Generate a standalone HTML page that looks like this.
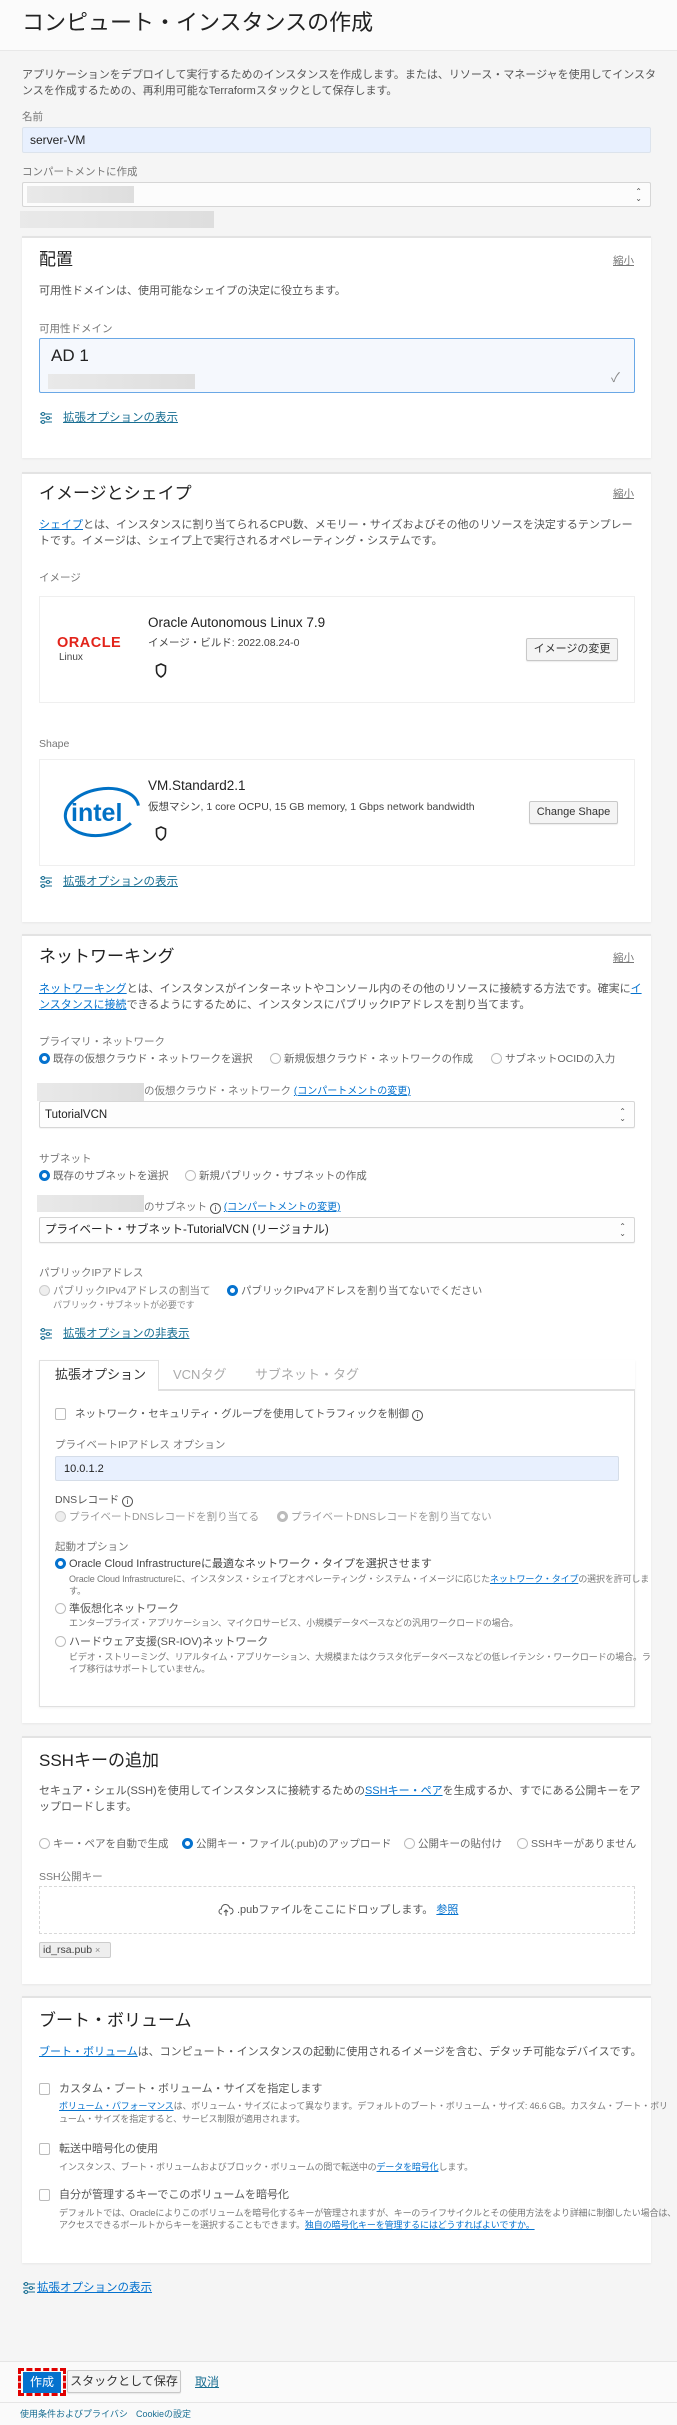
<!DOCTYPE html>
<html><head><meta charset="utf-8">
<style>
*{margin:0;padding:0;box-sizing:border-box}
body{width:677px;height:2425px;position:relative;background:#f5f5f5;font-family:"Liberation Sans","Noto Sans CJK JP",sans-serif;color:#444;overflow:hidden}
.a{position:absolute}
.t{position:absolute;white-space:nowrap;line-height:16px;font-size:11px}
.lb{color:#777;font-size:10.5px}
.h{font-size:17px;line-height:22px;color:#222}
.card{position:absolute;left:22px;width:629px;background:#fff;border-top:2px solid #e3e3e3;box-shadow:0 1px 2px rgba(0,0,0,.06)}
.lk{color:#0572ce;text-decoration:underline}
.tl{color:#1a6f93;text-decoration:underline;font-size:11.5px}
.sm{color:#777;font-size:9px;line-height:12px;letter-spacing:-0.15px}
.blur{position:absolute;background:linear-gradient(90deg,#e9e9e9,#dedede);}
.sel{position:absolute;left:39px;width:596px;background:#fdfdfd;border:1px solid #d6d6d6;border-radius:2px;box-shadow:0 1px 1px rgba(0,0,0,.05)}
.arr{position:absolute;right:8px;top:50%;transform:translateY(-50%);font-size:8px;line-height:7px;color:#555;text-align:center}
.r{position:absolute;width:11px;height:11px;border-radius:50%;border:1px solid #bbb;background:#fff}
.r.on{border:3px solid #0572ce}
.r.dis{background:#eee;border-color:#ccc}
.r.don{border:3px solid #bbb}
.cb{position:absolute;width:11px;height:12px;border:1px solid #bbb;border-radius:2px;background:#fff}
.btn{position:absolute;background:#f4f4f4;border:1px solid #c8c8c8;border-radius:2px;font-size:11px;color:#333;text-align:center;box-shadow:0 1px 1px rgba(0,0,0,.08)}
.shr{font-size:10.5px;color:#777;text-decoration:underline}
</style></head><body>

<div class="a" style="left:0;top:0;width:677px;height:51px;background:#fbfbfb;border-bottom:1px solid #e8e8e8"></div>
<div class="t" style="left:22px;top:9px;font-size:22px;line-height:28px;color:#222">コンピュート・インスタンスの作成</div>

<div class="t" style="left:22px;top:67px;color:#555">アプリケーションをデプロイして実行するためのインスタンスを作成します。または、リソース・マネージャを使用してインスタ</div>
<div class="t" style="left:22px;top:83px;color:#555">ンスを作成するための、再利用可能なTerraformスタックとして保存します。</div>
<div class="t lb" style="left:22px;top:109px">名前</div>
<div class="a" style="left:22px;top:127px;width:629px;height:26px;background:#e8f0fe;border:1px solid #dce3ec;border-radius:2px"></div>
<div class="t" style="left:30px;top:132px;font-size:12px;color:#222">server-VM</div>
<div class="t lb" style="left:22px;top:164px">コンパートメントに作成</div>
<div class="a" style="left:22px;top:182px;width:629px;height:25px;background:#fcfcfc;border:1px solid #d6d6d6;border-radius:2px"><div class="arr">⌃<br>⌄</div></div>
<div class="blur" style="left:27px;top:186px;width:107px;height:17px"></div>
<div class="blur" style="left:20px;top:211px;width:194px;height:17px"></div>

<div class="card" style="top:236px;height:222px"></div>
<div class="t h" style="left:39px;top:249px">配置</div>
<div class="t shr" style="left:613px;top:253px">縮小</div>
<div class="t" style="left:39px;top:283px;color:#555">可用性ドメインは、使用可能なシェイプの決定に役立ちます。</div>
<div class="t lb" style="left:39px;top:321px">可用性ドメイン</div>
<div class="a" style="left:39px;top:338px;width:596px;height:55px;background:#f5f8fd;border:1px solid #6aa8e6;border-radius:2px"></div>
<div class="t" style="left:51px;top:346px;font-size:17px;line-height:20px;color:#222">AD 1</div>
<div class="blur" style="left:48px;top:374px;width:147px;height:15px"></div>
<div class="t" style="left:611px;top:370px;color:#888;font-size:13px">✓</div>
<svg class="a" style="left:39px;top:411px" width="14" height="14" viewBox="0 0 14 14" fill="none" stroke="#1a6f93" stroke-width="1"><path d="M1 3h12M1 7h12M1 11h12"/><circle cx="4" cy="3" r="1.5" fill="#fff"/><circle cx="9" cy="7" r="1.5" fill="#fff"/><circle cx="4" cy="11" r="1.5" fill="#fff"/></svg>
<div class="t tl" style="left:63px;top:410px">拡張オプションの表示</div>

<div class="card" style="top:472px;height:450px"></div>
<div class="t h" style="left:39px;top:483px">イメージとシェイプ</div>
<div class="t shr" style="left:613px;top:486px">縮小</div>
<div class="t" style="left:39px;top:517px;color:#555"><span class="lk">シェイプ</span>とは、インスタンスに割り当てられるCPU数、メモリー・サイズおよびその他のリソースを決定するテンプレー</div>
<div class="t" style="left:39px;top:533px;color:#555">トです。イメージは、シェイプ上で実行されるオペレーティング・システムです。</div>
<div class="t lb" style="left:39px;top:570px">イメージ</div>
<div class="a" style="left:39px;top:596px;width:596px;height:107px;border:1px solid #efefef"></div>
<div class="t" style="left:57px;top:635px;font-size:14.5px;color:#e2231a;letter-spacing:0.5px;font-weight:bold">ORACLE</div>
<div class="t" style="left:59px;top:650px;font-size:10px;color:#444">Linux</div>
<div class="t" style="left:148px;top:615px;font-size:13.5px;color:#222">Oracle Autonomous Linux 7.9</div>
<div class="t" style="left:148px;top:635px;font-size:10.5px;color:#444">イメージ・ビルド: 2022.08.24-0</div>
<svg class="a" style="left:155px;top:663px" width="12" height="15" viewBox="0 0 12 15"><path d="M6 1L1.5 3v4.5C1.5 10.5 3.5 12.8 6 14c2.5-1.2 4.5-3.5 4.5-6.5V3z" fill="none" stroke="#222" stroke-width="1.6"/></svg>
<div class="btn" style="left:526px;top:638px;width:92px;height:23px;line-height:21px">イメージの変更</div>
<div class="t lb" style="left:39px;top:736px">Shape</div>
<div class="a" style="left:39px;top:759px;width:596px;height:107px;border:1px solid #efefef"></div>
<svg class="a" style="left:62px;top:785px" width="80" height="54" viewBox="0 0 80 54"><ellipse cx="40" cy="27" rx="37" ry="23" fill="none" stroke="#0071c5" stroke-width="3" transform="rotate(-10 40 27)" stroke-dasharray="190 30" stroke-dashoffset="-20"/><text x="9" y="36" font-family="Liberation Sans" font-weight="bold" font-size="25" fill="#0071c5">intel</text></svg>
<div class="t" style="left:148px;top:778px;font-size:13.5px;color:#222">VM.Standard2.1</div>
<div class="t" style="left:148px;top:799px;font-size:10.5px;color:#444">仮想マシン, 1 core OCPU, 15 GB memory, 1 Gbps network bandwidth</div>
<svg class="a" style="left:155px;top:826px" width="12" height="15" viewBox="0 0 12 15"><path d="M6 1L1.5 3v4.5C1.5 10.5 3.5 12.8 6 14c2.5-1.2 4.5-3.5 4.5-6.5V3z" fill="none" stroke="#222" stroke-width="1.6"/></svg>
<div class="btn" style="left:529px;top:801px;width:89px;height:23px;line-height:21px">Change Shape</div>
<svg class="a" style="left:39px;top:875px" width="14" height="14" viewBox="0 0 14 14" fill="none" stroke="#1a6f93" stroke-width="1"><path d="M1 3h12M1 7h12M1 11h12"/><circle cx="4" cy="3" r="1.5" fill="#fff"/><circle cx="9" cy="7" r="1.5" fill="#fff"/><circle cx="4" cy="11" r="1.5" fill="#fff"/></svg>
<div class="t tl" style="left:63px;top:874px">拡張オプションの表示</div>

<div class="card" style="top:934px;height:789px"></div>
<div class="t h" style="left:39px;top:946px">ネットワーキング</div>
<div class="t shr" style="left:613px;top:950px">縮小</div>
<div class="t" style="left:39px;top:981px;color:#555"><span class="lk">ネットワーキング</span>とは、インスタンスがインターネットやコンソール内のその他のリソースに接続する方法です。確実に<span class="lk">イ</span></div>
<div class="t" style="left:39px;top:997px;color:#555"><span class="lk">ンスタンスに接続</span>できるようにするために、インスタンスにパブリックIPアドレスを割り当てます。</div>
<div class="t lb" style="left:39px;top:1034px">プライマリ・ネットワーク</div>
<div class="r on" style="left:39px;top:1053px"></div><div class="t lb" style="left:53px;top:1051px;color:#666">既存の仮想クラウド・ネットワークを選択</div>
<div class="r" style="left:270px;top:1053px"></div><div class="t lb" style="left:284px;top:1051px;color:#666">新規仮想クラウド・ネットワークの作成</div>
<div class="r" style="left:491px;top:1053px"></div><div class="t lb" style="left:505px;top:1051px;color:#666">サブネットOCIDの入力</div>
<div class="blur" style="left:37px;top:1083px;width:107px;height:18px"></div>
<div class="t lb" style="left:144px;top:1083px">の仮想クラウド・ネットワーク <span class="lk" style="font-size:10px">(コンパートメントの変更)</span></div>
<div class="sel" style="top:1101px;height:27px"><div class="arr">⌃<br>⌄</div></div>
<div class="t" style="left:45px;top:1107px;font-size:11.5px;color:#222">TutorialVCN</div>
<div class="t lb" style="left:39px;top:1151px">サブネット</div>
<div class="r on" style="left:39px;top:1170px"></div><div class="t lb" style="left:53px;top:1168px;color:#666">既存のサブネットを選択</div>
<div class="r" style="left:185px;top:1170px"></div><div class="t lb" style="left:199px;top:1168px;color:#666">新規パブリック・サブネットの作成</div>
<div class="blur" style="left:37px;top:1195px;width:107px;height:17px"></div>
<div class="t lb" style="left:144px;top:1199px">のサブネット <span style="display:inline-block;width:11px;height:11px;border:1px solid #555;border-radius:50%;font-size:8px;line-height:9px;text-align:center;color:#333;vertical-align:-1px">i</span> <span class="lk" style="font-size:10px">(コンパートメントの変更)</span></div>
<div class="sel" style="top:1217px;height:26px"><div class="arr">⌃<br>⌄</div></div>
<div class="t" style="left:45px;top:1222px;font-size:11.5px;color:#222">プライベート・サブネット-TutorialVCN (リージョナル)</div>
<div class="t lb" style="left:39px;top:1265px">パブリックIPアドレス</div>
<div class="r dis" style="left:39px;top:1285px"></div><div class="t lb" style="left:53px;top:1283px;color:#888">パブリックIPv4アドレスの割当て</div>
<div class="t sm" style="left:53px;top:1299px;color:#888">パブリック・サブネットが必要です</div>
<div class="r on" style="left:227px;top:1285px"></div><div class="t lb" style="left:241px;top:1283px;color:#666">パブリックIPv4アドレスを割り当てないでください</div>
<svg class="a" style="left:39px;top:1327px" width="14" height="14" viewBox="0 0 14 14" fill="none" stroke="#1a6f93" stroke-width="1"><path d="M1 3h12M1 7h12M1 11h12"/><circle cx="4" cy="3" r="1.5" fill="#fff"/><circle cx="9" cy="7" r="1.5" fill="#fff"/><circle cx="4" cy="11" r="1.5" fill="#fff"/></svg>
<div class="t tl" style="left:63px;top:1326px">拡張オプションの非表示</div>
<div class="a" style="left:39px;top:1360px;width:596px;height:347px;border:1px solid #e0e0e0;border-top:2px solid #e0e0e0;box-shadow:0 1px 2px rgba(0,0,0,.06)"></div>
<div class="a" style="left:39px;top:1360px;width:596px;height:31px;background:#fff"></div>
<div class="a" style="left:158px;top:1389px;width:477px;height:2px;background:#e0e0e0"></div>
<div class="a" style="left:39px;top:1360px;width:120px;height:31px;border:1px solid #e0e0e0;border-bottom:none;background:#fff"></div>
<div class="t" style="left:55px;top:1366px;font-size:13px;line-height:18px;color:#333">拡張オプション</div>
<div class="t" style="left:173px;top:1366px;font-size:13px;line-height:18px;color:#aaa">VCNタグ</div>
<div class="t" style="left:255px;top:1366px;font-size:13px;line-height:18px;color:#aaa">サブネット・タグ</div>
<div class="cb" style="left:55px;top:1408px"></div>
<div class="t lb" style="left:75px;top:1406px;color:#555">ネットワーク・セキュリティ・グループを使用してトラフィックを制御 <span style="display:inline-block;width:11px;height:11px;border:1px solid #555;border-radius:50%;font-size:8px;line-height:9px;text-align:center;color:#333;vertical-align:-1px">i</span></div>
<div class="t lb" style="left:55px;top:1437px">プライベートIPアドレス オプション</div>
<div class="a" style="left:55px;top:1456px;width:564px;height:25px;background:#e8f0fe;border:1px solid #d5dde8;border-radius:2px"></div>
<div class="t" style="left:64px;top:1461px;font-size:11px;color:#222">10.0.1.2</div>
<div class="t lb" style="left:55px;top:1492px;color:#555">DNSレコード <span style="display:inline-block;width:11px;height:11px;border:1px solid #555;border-radius:50%;font-size:8px;line-height:9px;text-align:center;color:#333;vertical-align:-1px">i</span></div>
<div class="r dis" style="left:55px;top:1511px"></div><div class="t lb" style="left:69px;top:1509px;color:#999">プライベートDNSレコードを割り当てる</div>
<div class="r don" style="left:277px;top:1511px"></div><div class="t lb" style="left:291px;top:1509px;color:#999">プライベートDNSレコードを割り当てない</div>
<div class="t lb" style="left:55px;top:1539px">起動オプション</div>
<div class="r on" style="left:55px;top:1558px"></div><div class="t" style="left:69px;top:1556px;font-size:11px;color:#444">Oracle Cloud Infrastructureに最適なネットワーク・タイプを選択させます</div>
<div class="t sm" style="left:69px;top:1573px">Oracle Cloud Infrastructureに、インスタンス・シェイプとオペレーティング・システム・イメージに応じた<span class="lk">ネットワーク・タイプ</span>の選択を許可しま</div>
<div class="t sm" style="left:69px;top:1585px">す。</div>
<div class="r" style="left:55px;top:1603px"></div><div class="t" style="left:69px;top:1601px;font-size:11px;color:#555">準仮想化ネットワーク</div>
<div class="t sm" style="left:69px;top:1617px">エンタープライズ・アプリケーション、マイクロサービス、小規模データベースなどの汎用ワークロードの場合。</div>
<div class="r" style="left:55px;top:1636px"></div><div class="t" style="left:69px;top:1634px;font-size:11px;color:#555">ハードウェア支援(SR-IOV)ネットワーク</div>
<div class="t sm" style="left:69px;top:1651px">ビデオ・ストリーミング、リアルタイム・アプリケーション、大規模またはクラスタ化データベースなどの低レイテンシ・ワークロードの場合。ラ</div>
<div class="t sm" style="left:69px;top:1663px">イブ移行はサポートしていません。</div>

<div class="card" style="top:1736px;height:248px"></div>
<div class="t h" style="left:39px;top:1750px">SSHキーの追加</div>
<div class="t" style="left:39px;top:1783px;color:#555">セキュア・シェル(SSH)を使用してインスタンスに接続するための<span class="lk">SSHキー・ペア</span>を生成するか、すでにある公開キーをア</div>
<div class="t" style="left:39px;top:1799px;color:#555">ップロードします。</div>
<div class="r" style="left:39px;top:1838px"></div><div class="t lb" style="left:53px;top:1836px;color:#666">キー・ペアを自動で生成</div>
<div class="r on" style="left:182px;top:1838px"></div><div class="t lb" style="left:196px;top:1836px;color:#666">公開キー・ファイル(.pub)のアップロード</div>
<div class="r" style="left:404px;top:1838px"></div><div class="t lb" style="left:418px;top:1836px;color:#666">公開キーの貼付け</div>
<div class="r" style="left:517px;top:1838px"></div><div class="t lb" style="left:531px;top:1836px;color:#666">SSHキーがありません</div>
<div class="t lb" style="left:39px;top:1869px">SSH公開キー</div>
<div class="a" style="left:39px;top:1886px;width:596px;height:48px;border:1px dashed #d8d8d8"></div>
<svg class="a" style="left:218px;top:1903px" width="16" height="14" viewBox="0 0 16 14" fill="none" stroke="#555" stroke-width="1"><path d="M4 11H3.5A2.5 2.5 0 0 1 3.5 6 4 4 0 0 1 11.5 5 2.8 2.8 0 0 1 12.5 11H12M8 13V7M6 9l2-2 2 2"/></svg>
<div class="t" style="left:237px;top:1902px;color:#555;font-size:11px">.pubファイルをここにドロップします。 <span class="lk">参照</span></div>
<div class="a" style="left:39px;top:1942px;width:72px;height:16px;background:#eee;border:1px solid #ccc;border-radius:2px"></div>
<div class="t" style="left:43px;top:1942px;font-size:10.5px;color:#444">id_rsa.pub <span style="color:#888;font-size:9px">×</span></div>

<div class="card" style="top:1996px;height:267px"></div>
<div class="t h" style="left:39px;top:2010px">ブート・ボリューム</div>
<div class="t" style="left:39px;top:2044px;color:#555"><span class="lk">ブート・ボリューム</span>は、コンピュート・インスタンスの起動に使用されるイメージを含む、デタッチ可能なデバイスです。</div>
<div class="cb" style="left:39px;top:2083px"></div>
<div class="t" style="left:59px;top:2081px;font-size:11px;color:#555">カスタム・ブート・ボリューム・サイズを指定します</div>
<div class="t sm" style="left:59px;top:2100px"><span class="lk">ボリューム・パフォーマンス</span>は、ボリューム・サイズによって異なります。デフォルトのブート・ボリューム・サイズ: 46.6 GB。カスタム・ブート・ボリ</div>
<div class="t sm" style="left:59px;top:2113px">ューム・サイズを指定すると、サービス制限が適用されます。</div>
<div class="cb" style="left:39px;top:2143px"></div>
<div class="t" style="left:59px;top:2141px;font-size:11px;color:#555">転送中暗号化の使用</div>
<div class="t sm" style="left:59px;top:2161px">インスタンス、ブート・ボリュームおよびブロック・ボリュームの間で転送中の<span class="lk">データを暗号化</span>します。</div>
<div class="cb" style="left:39px;top:2189px"></div>
<div class="t" style="left:59px;top:2187px;font-size:11px;color:#555">自分が管理するキーでこのボリュームを暗号化</div>
<div class="t sm" style="left:59px;top:2207px">デフォルトでは、Oracleによりこのボリュームを暗号化するキーが管理されますが、キーのライフサイクルとその使用方法をより詳細に制御したい場合は、</div>
<div class="t sm" style="left:59px;top:2219px">アクセスできるボールトからキーを選択することもできます。<span class="lk">独自の暗号化キーを管理するにはどうすればよいですか。</span></div>

<svg class="a" style="left:22px;top:2281px" width="14" height="14" viewBox="0 0 14 14" fill="none" stroke="#1a6f93" stroke-width="1"><path d="M1 3h12M1 7h12M1 11h12"/><circle cx="4" cy="3" r="1.5" fill="#fff"/><circle cx="9" cy="7" r="1.5" fill="#fff"/><circle cx="4" cy="11" r="1.5" fill="#fff"/></svg>
<div class="t tl" style="left:37px;top:2280px;color:#0572ce">拡張オプションの表示</div>

<div class="a" style="left:0;top:2361px;width:677px;height:41px;background:#fafafa;border-top:1px solid #e5e5e5"></div>
<div class="a" style="left:18px;top:2368px;width:48px;height:28px;border:3px dashed #e00000"></div>
<div class="a" style="left:23px;top:2372px;width:38px;height:21px;background:#0572ce;color:#fff;font-size:12px;line-height:21px;text-align:center">作成</div>
<div class="btn" style="left:67px;top:2370px;width:114px;height:23px;line-height:21px;font-size:12px">スタックとして保存</div>
<div class="t" style="left:195px;top:2374px;font-size:12px;color:#1a6f93;text-decoration:underline">取消</div>
<div class="a" style="left:0;top:2402px;width:677px;height:23px;background:#fafafa;border-top:1px solid #e5e5e5"></div>
<div class="t" style="left:20px;top:2406px;font-size:9px;color:#1a6f93">使用条件およびプライバシ</div>
<div class="t" style="left:136px;top:2406px;font-size:9px;color:#1a6f93">Cookieの設定</div>
</body></html>
